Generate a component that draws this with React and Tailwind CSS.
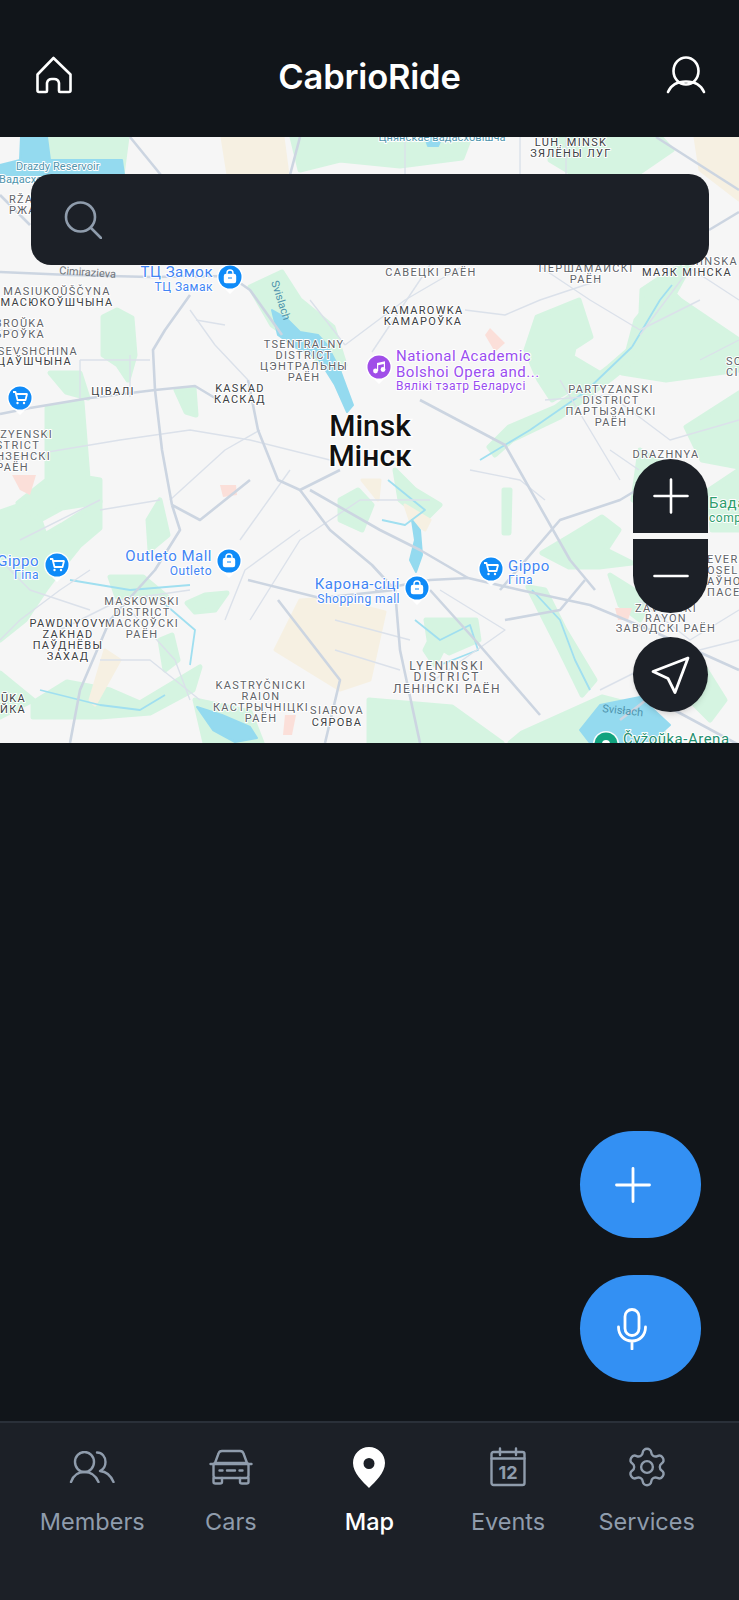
import React from "react";

const SANS = "font-['Inter','Liberation_Sans',sans-serif]";

const greens = [
  "M47 137H127L122 175H47Z",
  "M292 137H470L462 158L400 166L340 160L300 170Z",
  "M556 137H660L672 150L640 172H570L550 160Z",
  "M103 317L117 310L132 318L135 355L128 380L118 365L103 355Z",
  "M50 373L80 373L88 398L66 392Z",
  "M47 408L82 402L88 478L100 480L100 502L62 508L40 520L18 503L47 480Z",
  "M176 390L194 388L196 415L186 412Z",
  "M250 287L282 272L300 300L333 327L345 365L335 375L300 345L272 325Z",
  "M537 317L579 300L591 337L574 348L572 357L599 373L552 400L539 380L526 350Z",
  "M636 320L665 285L680 300L739 340V370L666 380L622 373Z",
  "M686 427L739 393V467L702 460Z",
  "M489 447L509 427L556 407L609 367L632 347L640 355L612 378L560 417L512 440L495 455Z",
  "M642 290L672 270L690 265L660 320L640 335Z",
  "M0 512L20 505L40 520L45 535L62 525L100 501V528L80 545L60 570L45 590L25 620L0 640Z",
  "M110 577L143 577L167 597L117 597Z",
  "M187 603L205 595L227 593L215 610L195 612Z",
  "M160 500L168 535L150 550L148 520Z",
  "M33 703L67 682L110 690L140 703L200 667L193 690L150 713L100 717L33 717Z",
  "M0 673L33 700L0 717Z",
  "M160 640L172 635L178 660L165 670Z",
  "M195 700L250 712L262 743H205Z",
  "M340 500L358 490L372 505L362 530L340 520Z",
  "M542 553L569 537L602 517L619 530L606 550L632 563L599 567L569 567Z",
  "M528 587L545 590L565 630L595 680L582 695L560 650Z",
  "M522 733L602 697L652 710L669 743H510Z",
  "M426 620L476 620L479 640L449 653L429 640Z",
  "M369 700L452 707L502 743H369Z",
  "M504 490H510L509 533H504Z",
  "M709 490L739 470V530H712Z",
  "M640 450L672 470L633 500Z",
  "M395 470L415 490L440 505L425 520L400 500Z",
  "M670 680L700 660L725 700L710 720Z",
  "M435 630L445 645L435 665L425 650Z",
  "M610 575L650 600L640 620L620 605Z",
];

const beige = [
  "M222 137H283L288 175H228Z",
  "M300 600L330 598L385 612L370 680L340 690L275 650Z",
  "M105 650L120 660L95 705L90 700Z",
  "M695 137H739V200L700 170Z",
  "M405 505L430 520L425 530L410 520Z",
  "M362 480L380 480L378 500Z",
];

const water = [
  "M21 137H47L50 160L122 160L124 175H0V165L20 160Z",
  "M425 137H442L438 146H428Z",
  "M272 310L286 318L300 332L318 335L327 345L340 370L353 405L347 412L335 385L318 358L295 347L278 335Z",
  "M412 520L420 530L422 555L416 572L410 560L415 540Z",
  "M197 707L222 715L250 727L257 738L235 742L213 730Z",
  "M600 705L640 697L670 725L650 743H590L580 730Z",
];

const blush = [
  "M220 485H236L237 495L223 497Z",
  "M12 475L36 475L30 495L20 490Z",
  "M285 715H296L292 735H283Z",
  "M615 608H632L628 620H618Z",
  "M490 328L505 343L495 352L485 335Z",
];

const mainRoads = [
  "M30 408L90 398L155 390L195 386L215 398",
  "M0 414L30 408",
  "M190 295L165 330L153 350L155 390L162 450L172 505",
  "M0 272L70 275L150 277L230 276L250 290L282 335",
  "M248 380L258 430L278 480L300 490L340 470",
  "M172 505L180 530L155 570L110 620L80 690L70 743",
  "M172 505L200 520L250 480",
  "M310 490L380 530L420 550L468 578L520 590L590 605L650 630L739 670",
  "M300 490L330 530L372 565L395 590L400 650L420 743",
  "M248 580L320 598L395 590",
  "M278 600L340 680L325 743",
  "M420 400L505 445L570 560L595 590",
  "M505 620L560 610L585 580",
  "M500 590L560 520L620 500L670 470",
  "M430 590L475 640L540 715",
  "M375 590L430 580L468 578",
  "M130 137L165 180",
  "M656 137L739 190",
  "M0 195L30 225",
  "M709 230L739 212",
  "M620 720L650 697L739 745",
  "M300 137L290 175",
];

const thinRoads = [
  "M0 460L60 450L120 440L190 430L250 440L330 460",
  "M80 360H150M80 360V400M130 355V397",
  "M170 500L225 450L260 430",
  "M60 630L120 600L190 590",
  "M0 640L20 620L60 590L90 570",
  "M100 660L150 660L200 700",
  "M130 610L175 660L190 700",
  "M240 540L290 470",
  "M250 620L300 540L360 500L430 500",
  "M100 510L160 500",
  "M310 300L345 345M345 345L405 300L465 265",
  "M430 265L400 310L372 352",
  "M465 310L505 315L540 300L600 280",
  "M530 260L590 300L640 330L700 300",
  "M545 400L610 395L670 440L739 420",
  "M610 450L639 470M560 380L620 480",
  "M640 335L690 268L739 300",
  "M700 360L739 340",
  "M440 590L505 630L420 690",
  "M600 690L660 660L739 640",
  "M335 620L410 640M335 650L400 670",
  "M20 540L100 500",
  "M405 137V175M520 137V175M566 137V175",
  "M639 600L690 640L739 610",
  "M0 350H60M0 330H40",
  "M190 310L215 345L248 380",
  "M196 320L225 325",
  "M470 470L520 480L545 500",
  "M0 560L30 590L90 610",
  "M225 620L245 570L300 530",
];

const rivers = [
  "M388 480L425 510L405 525L382 520",
  "M480 460L530 430L585 392L632 347",
  "M632 347L660 300L672 285",
  "M532 590L560 620L575 660L590 690",
  "M70 580L130 590L190 585",
  "M40 690L100 705L140 710L165 695",
  "M190 665L195 630L160 600",
  "M415 620L440 640L470 625L478 650L440 665",
];

const Lbl = ({ x, y, lines, anchor = "middle", size = 11, fill = "#3c4043", track = 1.3, step = 11 }) => (
  <text
    textAnchor={anchor}
    fontSize={size}
    fontWeight={400}
    letterSpacing={track}
    fill={fill}
    stroke="#ffffff"
    strokeWidth={2}
    paintOrder="stroke"
    strokeLinejoin="round"
  >
    {lines.map((l, i) => (
      <tspan key={i} x={x} y={y + i * step}>
        {l}
      </tspan>
    ))}
  </text>
);

const Poi = ({ x, y, lines, anchor = "start", fill = "#4285f4" }) => (
  <text
    textAnchor={anchor}
    fill={fill}
    stroke="#ffffff"
    strokeWidth={2}
    paintOrder="stroke"
    strokeLinejoin="round"
    fontWeight={400}
  >
    {lines.map((l, i) => (
      <tspan key={i} x={x} y={y + l[2]} fontSize={l[1]} letterSpacing={0.5}>
        {l[0]}
      </tspan>
    ))}
  </text>
);

const Pin = ({ x, y, color = "#0f8bf8", kind }) => (
  <g>
    <path
      d={`M${x - 13} ${y}a13 13 0 0 1 26 0c0 6 -4 10 -8 12l-5 5l-5 -5c-4 -2 -8 -6 -8 -12z`}
      fill="#ffffff"
      fillOpacity="0.92"
    />
    <circle cx={x} cy={y} r="11.5" fill={color} />
    {kind === "bag" && (
      <g fill="none" stroke="#fff" strokeWidth="1.4">
        <rect x={x - 5.5} y={y - 2.5} width="11" height="8" rx="1.5" fill="#fff" />
        <path d={`M${x - 3} ${y - 2.5}v-1.5a3 3 0 0 1 6 0v1.5`} />
        <path d={`M${x - 2} ${y + 1}h4`} stroke={color} strokeWidth="1" />
      </g>
    )}
    {kind === "cart" && (
      <g fill="none" stroke="#fff" strokeWidth="1.8" strokeLinejoin="round">
        <path d={`M${x - 7} ${y - 6}h2.5l2 8h8l1.5 -6h-11`} />
        <circle cx={x - 2.5} cy={y + 5} r="1.2" fill="#fff" stroke="none" />
        <circle cx={x + 4} cy={y + 5} r="1.2" fill="#fff" stroke="none" />
      </g>
    )}
    {kind === "music" && (
      <g fill="#fff">
        <circle cx={x - 3.5} cy={y + 4} r="2.4" />
        <circle cx={x + 4} cy={y + 2.5} r="2.4" />
        <path d={`M${x - 2} ${y + 4}v-8l8 -1.7v8h-1.2v-5.2l-5.6 1.2v5.7z`} />
      </g>
    )}
    {!kind && <circle cx={x} cy={y} r="4" fill="#fff" />}
  </g>
);

function MapArt() {
  return (
    <svg viewBox="0 137 739 606" className="block w-[739px] h-[606px]" style={{ fontFamily: "Roboto, sans-serif" }}>
      <rect x="0" y="137" width="739" height="606" fill="#f6f6f6" />
      <g style={{ filter: "blur(0.6px)" }}>
        {greens.map((d, i) => (
          <path key={i} d={d} fill="#d5f4e1" stroke="#d5f4e1" strokeWidth="5" strokeLinejoin="round" />
        ))}
        {beige.map((d, i) => (
          <path key={i} d={d} fill="#f6f0e2" stroke="#f6f0e2" strokeWidth="3" strokeLinejoin="round" />
        ))}
        {blush.map((d, i) => (
          <path key={i} d={d} fill="#fbdfd9" />
        ))}
        {water.map((d, i) => (
          <path key={i} d={d} fill="#94daef" stroke="#94daef" strokeWidth="2" strokeLinejoin="round" />
        ))}
        {rivers.map((d, i) => (
          <path key={i} d={d} fill="none" stroke="#a0dff0" strokeWidth="1.8" strokeLinejoin="round" />
        ))}
        {thinRoads.map((d, i) => (
          <path key={i} d={d} fill="none" stroke="#dbe1ea" strokeWidth="1.4" strokeLinejoin="round" />
        ))}
        {mainRoads.map((d, i) => (
          <path key={i} d={d} fill="none" stroke="#ccd5e1" strokeWidth="2.6" strokeLinejoin="round" />
        ))}
      </g>

      <Lbl x={16} y={170} anchor="start" track={0.1} fill="#4f94ad" lines={["Drazdy Reservoir"]} />
      <Lbl x={-1} y={183} anchor="start" track={0.1} fill="#4f94ad" lines={["Вадасховішча"]} />
      <Lbl x={442} y={141} track={0.1} fill="#4f94ad" lines={["Цнянскае вадасховішча"]} />
      <Lbl x={9} y={203} anchor="start" lines={["RŽA", "РЖА"]} fill="#5f6368" />
      <Lbl x={571} y={146} lines={["LUH, MINSK", "ЗЯЛЁНЫ ЛУГ"]} step={10.5} />
      <Lbl x={57} y={295} lines={["MASIUKOŬŠČYNA"]} fill="#5f6368" />
      <Lbl x={57} y={306} lines={["МАСЮКОЎШЧЫНА"]} />
      <Lbl x={45} y={327} anchor="end" lines={["BROŬKA", "БРОЎКА"]} fill="#5f6368" />
      <Lbl x={78} y={355} anchor="end" lines={["TSEVSHCHINA"]} fill="#5f6368" />
      <Lbl x={72} y={365} anchor="end" lines={["ЛІЦАЎШЧЫНА"]} />
      <Lbl x={113} y={395} lines={["ЦІВАЛІ"]} />
      <Lbl x={240} y={392} lines={["KASKAD", "КАСКАД"]} />
      <Lbl x={304} y={348} lines={["TSENTRALNY", "DISTRICT", "ЦЭНТРАЛЬНЫ", "РАЁН"]} fill="#5f6368" />
      <Lbl x={53} y={438} anchor="end" lines={["FRUNZYENSKI"]} fill="#5f6368" />
      <Lbl x={40} y={449} anchor="end" lines={["DISTRICT"]} fill="#5f6368" />
      <Lbl x={51} y={460} anchor="end" lines={["ФРУНЗЕНСКІ"]} fill="#5f6368" />
      <Lbl x={29} y={471} anchor="end" lines={["РАЁН"]} fill="#5f6368" />
      <Lbl x={423} y={314} lines={["KAMAROWKA", "КАМАРОЎКА"]} />
      <Lbl x={431} y={276} lines={["САВЕЦКІ РАЁН"]} fill="#5f6368" />
      <Lbl x={586} y={272} lines={["ПЕРШАМАЙСКІ", "РАЁН"]} fill="#5f6368" />
      <Lbl x={690} y={265} lines={["MAYAK MINSKA"]} fill="#5f6368" />
      <Lbl x={687} y={276} lines={["МАЯК МІНСКА"]} />
      <Lbl x={726} y={365} anchor="start" lines={["SOS", "СІ"]} fill="#5f6368" />
      <Lbl x={611} y={393} lines={["PARTYZANSKI", "DISTRICT", "ПАРТЫЗАНСКІ", "РАЁН"]} fill="#5f6368" />
      <Lbl x={666} y={458} lines={["DRAZHNYA"]} fill="#5f6368" />
      <Lbl x={142} y={605} lines={["MASKOWSKI", "DISTRICT", "МАСКОЎСКІ", "РАЁН"]} fill="#5f6368" />
      <Lbl x={68} y={627} lines={["PAWDNYOVY", "ZAKHAD", "ПАЎДНЁВЫ", "ЗАХАД"]} />
      <Lbl x={26} y={702} anchor="end" lines={["ŁŪKA", "АЙКА"]} />
      <Lbl x={261} y={689} lines={["KASTRYČNICKI", "RAION", "КАСТРЫЧНІЦКІ", "РАЁН"]} fill="#5f6368" />
      <Lbl x={337} y={714} lines={["SIAROVA"]} fill="#5f6368" />
      <Lbl x={337} y={726} lines={["СЯРОВА"]} />
      <Lbl x={447} y={670} size={12} track={2} lines={["LYENINSKI", "DISTRICT"]} fill="#5f6368" />
      <Lbl x={447} y={693} size={12} track={1.6} lines={["ЛЕНІНСКІ РАЁН"]} fill="#5f6368" />
      <Lbl x={707} y={563} anchor="start" lines={["EVERNY", "OSEL", "АЎНОЧ", "ПАСЕЛ"]} fill="#5f6368" />
      <Lbl x={666} y={612} lines={["ZAVODSKI", "RAYON", "ЗАВОДСКІ РАЁН"]} step={10} fill="#5f6368" />

      <text x={59} y={274} fontSize={11} fill="#70757a" transform="rotate(4 59 274)">Cimirazieva</text>
      <text x={271} y={282} fontSize={11} fill="#4f94ad" transform="rotate(72 271 282)">Svislach</text>
      <text x={602} y={712} fontSize={11} fill="#4f94ad" transform="rotate(6 602 712)">Svisłach</text>

      <text
        textAnchor="middle"
        fill="#111111"
        fontSize={30}
        fontWeight={500}
        stroke="#ffffff"
        strokeWidth={2.5}
        paintOrder="stroke"
      >
        <tspan x={370} y={436}>Minsk</tspan>
        <tspan x={370} y={466}>Мінск</tspan>
      </text>

      <Poi x={213} y={277} anchor="end" lines={[["ТЦ Замок", 15, 0], ["ТЦ Замак", 12, 14]]} />
      <Poi x={396} y={361} fill="#9a4df0" lines={[["National Academic", 15, 0], ["Bolshoi Opera and...", 15, 16], ["Вялікі тэатр Беларусі", 12, 29]]} />
      <Poi x={39} y={566} anchor="end" lines={[["Gippo", 15, 0], ["Гіпа", 12, 13]]} />
      <Poi x={212} y={561} anchor="end" lines={[["Outleto Mall", 15, 0], ["Outleto", 12, 14]]} />
      <Poi x={400} y={589} anchor="end" lines={[["Карона-сіці", 15, 0], ["Shopping mall", 12, 14]]} />
      <Poi x={508} y={571} lines={[["Gippo", 15, 0], ["Гіпа", 12, 13]]} />
      <Poi x={709} y={508} fill="#2e9e6d" lines={[["Бадары", 15, 0], ["complex", 12, 14]]} />
      <Poi x={623} y={744} fill="#1e8e6e" lines={[["Čyžoŭka-Arena", 15, 0]]} />

      <Pin x={230} y={277} kind="bag" />
      <Pin x={20} y={398} kind="cart" />
      <Pin x={379} y={367} color="#a04ee8" kind="music" />
      <Pin x={57} y={565} kind="cart" />
      <Pin x={229} y={561} kind="bag" />
      <Pin x={417} y={588} kind="bag" />
      <Pin x={491} y={569} kind="cart" />
      <Pin x={606} y={744} color="#12a37f" />
    </svg>
  );
}

function NavItem({ label, active, children }) {
  return (
    <div className="flex-1 flex flex-col items-center">
      <div className="h-[42px] flex items-center justify-center">{children}</div>
      <span className={`mt-[18px] text-[23.5px] leading-[32px] ${active ? "text-white font-medium" : "text-[#8f9cac]"}`}>{label}</span>
    </div>
  );
}

const iconStroke = { fill: "none", stroke: "#8f9cac", strokeWidth: 2.4, strokeLinecap: "round", strokeLinejoin: "round" };

export default function App() {
  return (
    <div className={`w-[739px] h-[1600px] flex flex-col bg-[#11151a] overflow-hidden ${SANS}`}>
      <header className="h-[137px] pt-[13px] pl-[35px] pr-[33px] flex items-center justify-between bg-[#11151a]">
        <svg width="38" height="38" viewBox="0 0 38 38" fill="none" stroke="#fff" strokeWidth="2.6" strokeLinejoin="round">
          <path d="M18.5 2L2.5 18.5V34.5a1.5 1.5 0 0 0 1.5 1.5H11a1 1 0 0 0 1-1V27a5 5 0 0 1 5-4h2a5 5 0 0 1 5 4V35a1 1 0 0 0 1 1H34a1.5 1.5 0 0 0 1.5-1.5V18.5Z" />
        </svg>
        <span className="text-[34.5px] leading-[40px] font-semibold text-white tracking-[-0.2px] pt-[3px]">CabrioRide</span>
        <svg width="40" height="38" viewBox="0 0 40 38" fill="none" stroke="#fff" strokeWidth="2.6" strokeLinecap="round">
          <ellipse cx="20" cy="15" rx="12.5" ry="13.5" />
          <path d="M2 36C5 29 12 25.5 20 25.5S35 29 38 36" />
        </svg>
      </header>

      <div className="relative h-[606px]">
        <MapArt />
        <div className="absolute left-[31px] right-[30px] top-[37px] h-[91px] rounded-[20px] bg-[#1c2027] flex items-center pl-[33px]">
          <svg width="38" height="38" viewBox="0 0 38 38" fill="none" stroke="#8f9cac" strokeWidth="2.6" strokeLinecap="round">
            <circle cx="16.5" cy="16" r="14.5" />
            <path d="M27 27L37 37" />
          </svg>
        </div>
        <div className="absolute right-[31px] top-[322px] w-[75px] flex flex-col">
          <button className="h-[74px] rounded-t-full bg-[#1c2027] flex items-center justify-center">
            <svg width="36" height="36" viewBox="0 0 36 36" stroke="#fff" strokeWidth="2.6" strokeLinecap="round">
              <path d="M1.5 18H34.5M18 1.5V34.5" />
            </svg>
          </button>
          <button className="mt-[6px] h-[74px] rounded-b-full bg-[#1c2027] flex items-center justify-center">
            <svg width="36" height="4" viewBox="0 0 36 4" stroke="#fff" strokeWidth="2.6" strokeLinecap="round">
              <path d="M1.5 2H34.5" />
            </svg>
          </button>
          <button className="mt-[24px] h-[75px] rounded-full bg-[#1c2027] flex items-center justify-center shadow-md">
            <svg width="40" height="40" viewBox="0 0 40 40" fill="none" stroke="#fff" strokeWidth="2.8" strokeLinejoin="round">
              <path d="M37 3L2 16.5L17 23.5L24 37.5Z" />
            </svg>
          </button>
        </div>
      </div>

      <main className="flex-1 flex flex-col items-end justify-end gap-[37px] pr-[38px] pb-[39px]">
        <button className="w-[121px] h-[107px] rounded-full bg-[#3390f3] flex items-center pl-[35px]">
          <svg width="36" height="36" viewBox="0 0 36 36" stroke="#fff" strokeWidth="2.8" strokeLinecap="round">
            <path d="M1.5 18H34.5M18 1.5V34.5" />
          </svg>
        </button>
        <button className="w-[121px] h-[107px] rounded-full bg-[#3390f3] flex items-center pl-[37px]">
          <svg width="30" height="42" viewBox="0 0 30 42" fill="none" stroke="#fff" strokeWidth="2.8" strokeLinecap="round">
            <rect x="8" y="1.5" width="14" height="26" rx="7" />
            <path d="M1.5 19C1.5 27 7 33 15 33S28.500 27 28.500 19M15 33V41" />
          </svg>
        </button>
      </main>

      <nav className="h-[179px] border-t-2 border-[#2a3039] bg-[#1c2027] px-[23px] pt-[23px] flex items-start">
        <NavItem label="Members">
          <svg width="46" height="32" viewBox="0 0 46 32" {...iconStroke}>
            <ellipse cx="15.500" cy="11" rx="9.500" ry="10" />
            <path d="M2 31C4 25 9 21 15.500 21S27 25 29.500 31" />
            <path d="M28 1.500C33 1.500 36.500 5.500 36.500 11C36.500 15 34 18.500 31 20C37 20.500 42 25 44.500 31" />
          </svg>
        </NavItem>
        <NavItem label="Cars">
          <svg width="44" height="36" viewBox="0 0 44 36" {...iconStroke}>
            <path d="M6 14L9.500 4.500C10 2.800 11 2 13 2H31C33 2 34 2.800 34.500 4.500L38 14" />
            <path d="M1.500 15H42.500" />
            <rect x="4.500" y="14" width="35" height="15" rx="2.500" />
            <path d="M4.500 29V33C4.500 34 5.500 34.500 6.500 34.500H11C12 34.500 13 34 13 33V29M31 29V33C31 34 32 34.500 33 34.500H37.500C38.500 34.500 39.500 34 39.500 33V29" />
            <path d="M10.500 21.500H13.500M30.500 21.500H33.500M18 21.500H26" />
          </svg>
        </NavItem>
        <NavItem label="Map" active>
          <svg width="32" height="41" viewBox="0 0 32 41">
            <path fill="#fff" fillRule="evenodd" d="M16 0C7 0 0 7 0 16C0 26 10 35 16 41C22 35 32 26 32 16C32 7 25 0 16 0ZM16 11A5.500 5.500 0 1 1 16 22A5.500 5.500 0 1 1 16 11Z" />
          </svg>
        </NavItem>
        <NavItem label="Events">
          <svg width="36" height="40" viewBox="0 0 36 40" {...iconStroke}>
            <rect x="1.500" y="5" width="33" height="33" rx="2" />
            <path d="M1.500 11.500H34.500M10 1.500V8M26 1.500V8" />
            <text x="18" y="32" textAnchor="middle" fontSize="18" fontWeight="700" fill="#8f9cac" stroke="none">12</text>
          </svg>
        </NavItem>
        <NavItem label="Services">
          <svg width="44" height="44" viewBox="0 0 24 24" fill="none" stroke="#8f9cac" strokeWidth="1.300" strokeLinecap="round" strokeLinejoin="round">
            <path d="M9.671 4.136a2.34 2.34 0 0 1 4.659 0 2.34 2.34 0 0 0 3.319 1.915 2.34 2.34 0 0 1 2.33 4.033 2.34 2.34 0 0 0 0 3.831 2.34 2.34 0 0 1-2.33 4.033 2.34 2.34 0 0 0-3.319 1.915 2.34 2.34 0 0 1-4.659 0 2.34 2.34 0 0 0-3.32-1.915 2.34 2.34 0 0 1-2.33-4.033 2.34 2.34 0 0 0 0-3.831A2.34 2.34 0 0 1 6.35 6.051a2.34 2.34 0 0 0 3.319-1.915" />
            <circle cx="12" cy="12" r="3.200" />
          </svg>
        </NavItem>
      </nav>
    </div>
  );
}
